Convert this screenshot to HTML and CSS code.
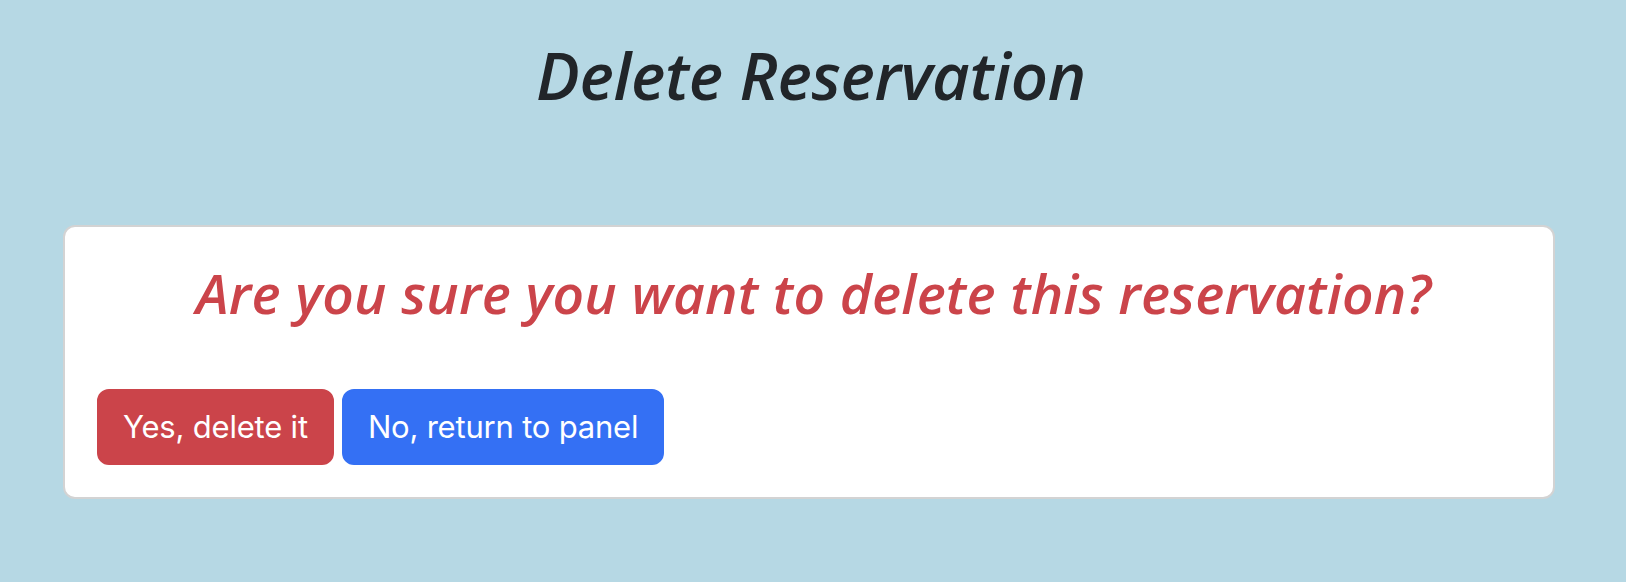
FILE: index.html
```html
<!DOCTYPE html>
<html lang="en">
<head>
<meta charset="utf-8">
<title>Delete Reservation</title>
<link rel="stylesheet" href="styles.css">
</head>
<body>
  <main class="page">
    <h1 class="page-title">Delete Reservation</h1>
    <section class="card">
      <h2 class="card-question">Are you sure you want to delete this reservation?</h2>
      <div class="actions">
        <button class="btn btn-danger" type="button">Yes, delete it</button>
        <button class="btn btn-primary" type="button">No, return to panel</button>
      </div>
    </section>
  </main>
</body>
</html>
```

FILE: styles.css
```css
html, body {
  margin: 0;
  padding: 0;
}

body {
  background: #b6d8e4;
  color: #212529;
  font-family: "Open Sans", "Noto Sans", sans-serif;
  width: 1626px;
  height: 582px;
  overflow: hidden;
}

.page {
  display: flex;
  flex-direction: column;
  padding: 34px 71px 0 63px;
}

.page-title {
  margin: 0 0 0 4px;
  text-align: center;
  font-size: 65px;
  line-height: 82px;
  font-style: italic;
  font-weight: 600;
  letter-spacing: -0.3px;
  color: #212529;
}

.card {
  margin-top: 109px;
  background: #ffffff;
  border: 2px solid #d3d3d3;
  border-radius: 12px;
  padding: 32px;
  display: flex;
  flex-direction: column;
}

.card-question {
  margin: 0 0 62px 0;
  padding-left: 9px;
  text-align: center;
  font-size: 55px;
  line-height: 68px;
  font-style: italic;
  font-weight: 600;
  letter-spacing: 0.2px;
  color: #cb444a;
}

.actions {
  display: flex;
  gap: 8px;
}

.btn {
  font-family: "Inter", "Liberation Sans", sans-serif;
  font-size: 31px;
  line-height: 48px;
  letter-spacing: -0.2px;
  padding: 12px 24px;
  border: 2px solid transparent;
  border-radius: 12px;
  color: #ffffff;
  cursor: pointer;
}

.btn-danger {
  background: #cb444a;
  border-color: #cb444a;
}

.btn-primary {
  background: #3470f4;
  border-color: #3470f4;
}
```
